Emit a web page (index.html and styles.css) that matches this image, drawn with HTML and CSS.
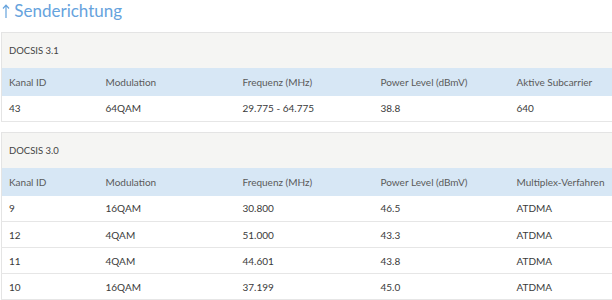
FILE: index.html
```html
<!DOCTYPE html>
<html lang="de">
<head>
<meta charset="utf-8">
<link rel="stylesheet" href="styles.css">
</head>
<body>
<h2 class="title"><svg class="arrow" width="8" height="14" viewBox="0 0 8 14" aria-hidden="true"><path d="M4 1.5V14M1 4.5L4 1.2L7 4.5" fill="none" stroke="#66a3dd" stroke-width="1.2"/></svg> Senderichtung</h2>

<table class="chan">
  <colgroup><col class="c1"><col class="c2"><col class="c3"><col class="c4"><col class="c5"></colgroup>
  <tr class="cap"><td colspan="5">DOCSIS 3.1</td></tr>
  <tr class="head"><th>Kanal ID</th><th>Modulation</th><th>Frequenz (MHz)</th><th>Power Level (dBmV)</th><th>Aktive Subcarrier</th></tr>
  <tr><td>43</td><td>64QAM</td><td>29.775 - 64.775</td><td>38.8</td><td>640</td></tr>
</table>

<table class="chan">
  <colgroup><col class="c1"><col class="c2"><col class="c3"><col class="c4"><col class="c5"></colgroup>
  <tr class="cap"><td colspan="5">DOCSIS 3.0</td></tr>
  <tr class="head"><th>Kanal ID</th><th>Modulation</th><th>Frequenz (MHz)</th><th>Power Level (dBmV)</th><th>Multiplex-Verfahren</th></tr>
  <tr><td>9</td><td>16QAM</td><td>30.800</td><td>46.5</td><td>ATDMA</td></tr>
  <tr><td>12</td><td>4QAM</td><td>51.000</td><td>43.3</td><td>ATDMA</td></tr>
  <tr><td>11</td><td>4QAM</td><td>44.601</td><td>43.8</td><td>ATDMA</td></tr>
  <tr><td>10</td><td>16QAM</td><td>37.199</td><td>45.0</td><td>ATDMA</td></tr>
</table>
</body>
</html>
```
FILE: styles.css
```css
html, body {
  margin: 0;
  padding: 0;
  background: #ffffff;
}
body {
  font-family: "Lato", "Open Sans", sans-serif;
  color: #444;
  padding-left: 1px;
  width: 640px;
}
.title {
  margin: 0;
  height: 32px;
  font-size: 17px;
  font-weight: normal;
  line-height: 22px;
  color: #66a3dd;
  padding-left: 1px;
}
.arrow {
  vertical-align: -1px;
}
.chan {
  border-collapse: collapse;
  table-layout: fixed;
  width: 640px;
  border-top: 1px solid #e4e4e4;
  border-left: 1px solid #e4e4e4;
  font-size: 10px;
  margin-bottom: 10px;
}
.c1 { width: 97px; }
.c2 { width: 137px; }
.c3 { width: 138px; }
.c4 { width: 136px; }
.c5 { width: 132px; }
.chan td, .chan th {
  padding: 0 0 0 7px;
  text-align: left;
  font-weight: normal;
  white-space: nowrap;
}
.chan tr {
  height: 26px;
  border-bottom: 1px solid #e6e6e6;
}
.chan td {
  color: #3a3a3a;
}
.chan .cap {
  height: 35px;
  background: #f5f5f3;
  border-bottom: none;
}
.chan .cap td {
  font-size: 9.5px;
  color: #444;
}
.chan .head {
  height: 28px;
  background: #d7e7f5;
  border-bottom: none;
}
.chan .head th {
  color: #5a5a5a;
}
```
